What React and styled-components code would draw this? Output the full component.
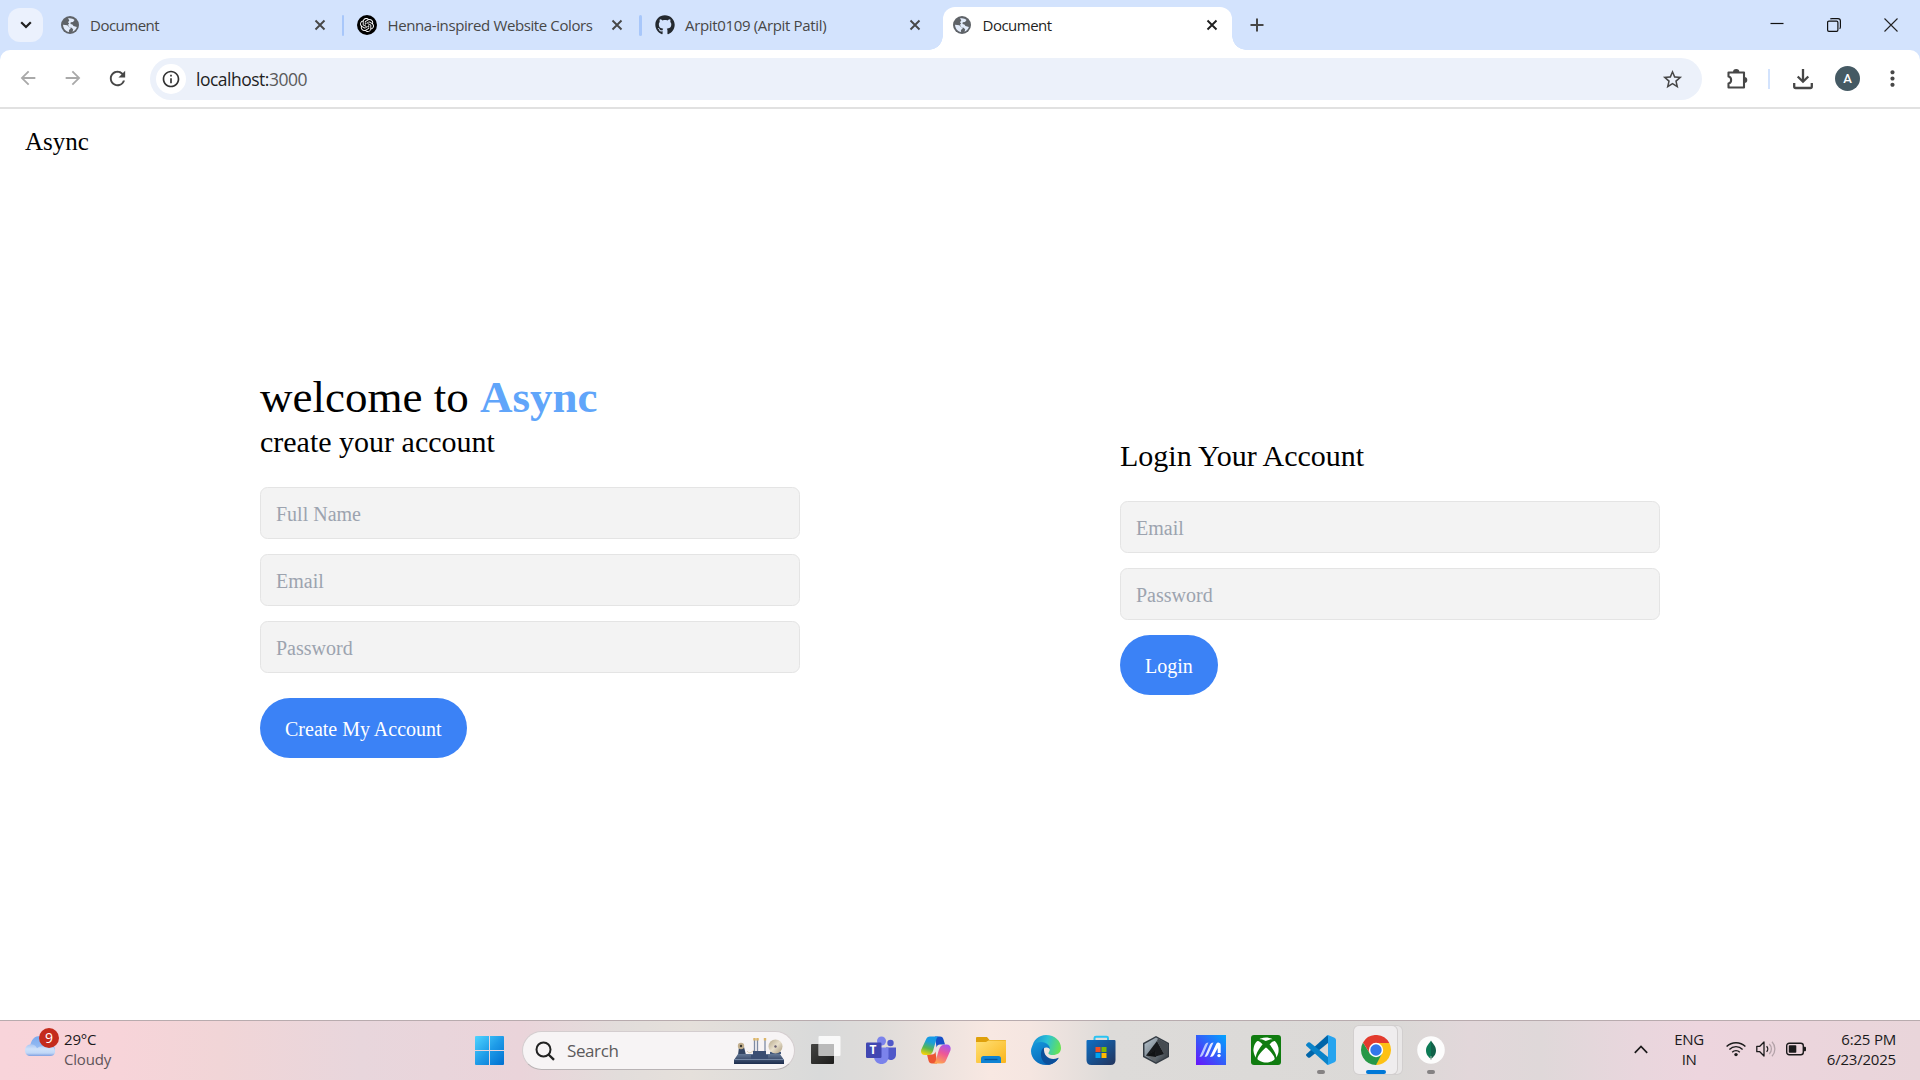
import React from "react";
import styled, { createGlobalStyle, css } from "styled-components";
import {
  MdArrowBack,
  MdArrowForward,
  MdRefresh,
  MdInfoOutline,
  MdStarBorder,
  MdMoreVert,
} from "react-icons/md";
import { FaGithub, FaXbox } from "react-icons/fa";
import { SiOpenai } from "react-icons/si";

const GlobalStyle = createGlobalStyle`
  *, *::before, *::after { box-sizing: border-box; }
  html, body { margin: 0; padding: 0; overflow: hidden; background: #fff; }
  svg { display: block; flex: none; }
`;

const uiFont = `"Open Sans", "Noto Sans", sans-serif`;
const pageFont = `"Liberation Serif", "Times New Roman", serif`;

const Screen = styled.div`
  width: 1920px;
  height: 1080px;
  display: flex;
  flex-direction: column;
  background: #fff;
  overflow: hidden;
`;

/* ---------- browser: tab strip ---------- */

const TabStrip = styled.div`
  height: 50px;
  flex: none;
  display: flex;
  align-items: stretch;
  padding-left: 8px;
  background: #d3e3fd;
`;

const TabSearch = styled.button`
  width: 35px;
  height: 34px;
  margin-top: 8px;
  padding: 0;
  border: 0;
  border-radius: 12px;
  background: #ebf1fd;
  display: grid;
  place-items: center;
`;

const activeTab = css`
  position: relative;
  width: 289.5px;
  height: 43px;
  margin: 7px 0 0 7px;
  padding: 0 14px 7px 9px;
  background: #fff;
  border-radius: 12px 12px 0 0;
  color: #1f1f1f;
  &::before,
  &::after {
    content: "";
    position: absolute;
    bottom: 0;
    width: 14px;
    height: 14px;
  }
  &::before {
    right: 100%;
    background: radial-gradient(circle at 0 0, transparent 13.5px, #fff 14px);
  }
  &::after {
    left: 100%;
    background: radial-gradient(circle at 100% 0, transparent 13.5px, #fff 14px);
  }
`;

const idleTab = css`
  width: 297.5px;
  padding: 0 15px 0 1px;
  color: #474747;
`;

const Tab = styled.div`
  flex: none;
  display: flex;
  align-items: center;
  font: 400 15px/20px ${uiFont};
  ${(p) => (p.$active ? activeTab : idleTab)}
`;

const TabDivider = styled.span`
  width: 2.5px;
  height: 21px;
  margin-right: 13px;
  border-radius: 2px;
  background: ${(p) => (p.$visible ? "#a8c7fa" : "transparent")};
`;

const Favicon = styled.span`
  width: 20px;
  height: 20px;
  flex: none;
  display: grid;
  place-items: center;
  border-radius: 50%;
  background: ${(p) => p.$bg || "transparent"};
  color: ${(p) => p.$color || "#5f6368"};
`;

const TabTitle = styled.span`
  flex: 1;
  margin-left: ${(p) => p.$left || 10.5}px;
  white-space: nowrap;
  letter-spacing: ${(p) => p.$tracking}px;
`;

const NewTab = styled.button`
  width: 50px;
  padding: 0;
  border: 0;
  background: none;
  display: grid;
  place-items: center;
`;

const WindowControls = styled.div`
  margin-left: auto;
  display: flex;
  align-items: center;
  gap: 43px;
  padding-right: 22px;
`;

/* ---------- browser: toolbar ---------- */

const ToolbarBack = styled.div`
  flex: none;
  background: #d3e3fd;
`;

const Toolbar = styled.div`
  height: 59px;
  display: flex;
  align-items: center;
  padding: 0 15px 0 17px;
  background: #fff;
  border-bottom: 2px solid #e1e1e1;
  border-radius: 10px 10px 0 0;
`;

const NavButtons = styled.div`
  display: flex;
  gap: 22.5px;
  width: 133px;
  color: #a9a9a9;
`;

const AddressBar = styled.div`
  width: 1552px;
  height: 42px;
  margin-top: 1px;
  padding: 0 18px 0 6px;
  display: flex;
  flex: none;
  align-items: center;
  border-radius: 21px;
  background: #ecf1fa;
  font: 400 17.5px/24px ${uiFont};
  letter-spacing: -0.5px;
  color: #1f1f1f;
`;

const SiteInfo = styled.span`
  width: 30px;
  height: 30px;
  margin-right: 10px;
  border-radius: 50%;
  display: grid;
  place-items: center;
  background: #fff;
  color: #333;
`;

const Port = styled.span`
  flex: 1;
  color: #5a5a5a;
`;

const ToolbarActions = styled.div`
  flex: 1;
  display: flex;
  align-items: center;
  padding-left: 24px;
  color: #474747;
`;

const ToolbarDivider = styled.span`
  width: 2px;
  height: 20px;
  margin: 0 22px 0 20px;
  background: #d3e3fd;
`;

const Avatar = styled.span`
  width: 25px;
  height: 25px;
  margin: 0 20px 0 21px;
  border-radius: 50%;
  background: #455a64;
  color: #fff;
  font: 500 13px/25px Roboto, sans-serif;
  text-align: center;
`;

/* ---------- page ---------- */

const Page = styled.div`
  height: 911px;
  flex: none;
  display: flex;
  flex-direction: column;
  font-family: ${pageFont};
  color: #000;
`;

const PageNav = styled.nav`
  height: 50px;
  padding: 19px 25px 0;
  font-size: 25px;
  line-height: 28px;
`;

const Main = styled.main`
  flex: 1;
  display: flex;
  align-items: center;
  justify-content: space-between;
  padding: 0 260px 51px;
`;

const Panel = styled.section`
  width: 540px;
  padding-top: ${(p) => p.$top || 0}px;
`;

const Heading = styled.h1`
  margin: 0 0 -1px;
  font-size: 45px;
  line-height: 45px;
  font-weight: 400;
`;

const Brand = styled.span`
  color: #60a5fa;
  font-weight: 700;
`;

const Subheading = styled.h2`
  margin: 0 0 23px;
  font-size: 30px;
  line-height: 45px;
  font-weight: 400;
`;

const Form = styled.form`
  display: flex;
  flex-direction: column;
  align-items: flex-start;
  gap: 15px;
`;

const Field = styled.input`
  width: 100%;
  height: 52px;
  padding: 2px 15px 0;
  border: 1px solid #e4e4e4;
  border-radius: 7.5px;
  background: #f3f3f3;
  font: 400 20px ${pageFont};
  outline: none;
  &::placeholder {
    color: #9ca3af;
    opacity: 1;
  }
`;

const Submit = styled.button`
  height: 60px;
  margin-top: ${(p) => p.$top || 0}px;
  padding: 2px 25px 0;
  border: 0;
  border-radius: 30px;
  background: #3b82f6;
  color: #fff;
  font: 400 20px ${pageFont};
`;

/* ---------- taskbar ---------- */

const Taskbar = styled.footer`
  height: 60px;
  flex: none;
  display: grid;
  grid-template-columns: 475px 1fr 315px;
  border-top: 1px solid #b8abae;
  font: 400 15px/20px ${uiFont};
  color: #1b1a1b;
  background: linear-gradient(
    90deg,
    #f8d4da 0,
    #f7d4d9 120px,
    #f1d5d7 220px,
    #e8d6dc 360px,
    #ead4da 520px,
    #e2dddb 620px,
    #e5e0db 690px,
    #d9dada 820px,
    #dfdcda 880px,
    #f8e8e2 990px,
    #f5e6e1 1030px,
    #dddbd9 1110px,
    #dbd9d7 1400px,
    #e2d7da 1470px,
    #dfd8d9 1540px,
    #e9d6dd 1640px,
    #edd5de 1700px,
    #e9d5da 1920px
  );
`;

const Weather = styled.div`
  display: flex;
  padding: 8px 0 0 24px;
`;

const WeatherIcon = styled.div`
  position: relative;
  width: 40px;
  padding-top: 6px;
`;

const Badge = styled.span`
  position: absolute;
  left: 15px;
  top: -1px;
  width: 20px;
  height: 20px;
  border-radius: 50%;
  background: #c42b1c;
  color: #fff;
  font-size: 14px;
  line-height: 20px;
  text-align: center;
`;

const Lines = styled.div`
  width: ${(p) => p.$width || "auto"};
  display: flex;
  flex-direction: column;
  text-align: ${(p) => p.$align || "left"};
  letter-spacing: ${(p) => p.$tracking || 0}px;
  white-space: nowrap;
`;

const Muted = styled.span`
  color: #5f5559;
`;

const Apps = styled.div`
  display: flex;
  align-items: flex-start;
`;

const Start = styled.div`
  width: 47px;
  padding-top: 15px;
`;

const SearchBox = styled.div`
  width: 273px;
  height: 39px;
  margin: 10px 3px 0 0;
  padding: 0 10px 0 12px;
  display: flex;
  align-items: center;
  border: 1px solid #d4cdcf;
  border-bottom-color: #b9b3b5;
  border-radius: 20px;
  background: #f7f4f5;
`;

const SearchLabel = styled.span`
  flex: 1;
  margin-left: 12px;
  font-size: 17px;
  letter-spacing: -0.4px;
  color: #5c5a5b;
`;

const AppSlot = styled.div`
  width: 55px;
  height: 54px;
  flex: none;
  display: flex;
  flex-direction: column;
  align-items: center;
  padding-top: 5px;
`;

const AppTile = styled.div`
  width: ${(p) => (p.$active ? 43 : 40)}px;
  height: 48px;
  flex: none;
  display: grid;
  place-items: center;
  border-radius: 5px;
  ${(p) =>
    p.$active &&
    css`
      background: #efedee;
      box-shadow: 0 0 0 1px #d2cfcf, 5px 0 0 0 #e9e7e7, 5px 0 0 1px #d2cfcf;
    `}
`;

const Indicator = styled.span`
  width: ${(p) => (p.$active ? 20 : 8)}px;
  height: 4px;
  margin-top: -4px;
  border-radius: 2px;
  background: ${(p) => (p.$active ? "#0078d7" : "#858283")};
  z-index: 1;
`;

const Tray = styled.div`
  display: flex;
  justify-content: flex-end;
  padding: 8px 24px 0 0;
`;

const TrayItem = styled.div`
  height: 40px;
  display: flex;
  align-items: center;
  gap: 10px;
  margin-right: ${(p) => p.$right}px;
  padding-left: ${(p) => p.$left || 0}px;
`;

/* ---------- icons ---------- */

const Cross = ({ color = "#474747" }) => (
  <svg width="12" height="12" viewBox="0 0 12 12" stroke={color} strokeWidth="1.9">
    <path d="M1.500 1.500 10.500 10.500M10.500 1.500 1.500 10.500" />
  </svg>
);

const Globe = () => (
  <Favicon>
    <svg width="18" height="18" viewBox="0 0 18 18">
      <circle cx="9" cy="9" r="9" fill="#5f6368" />
      <path
        d="M7 2.300C9.800 1.800 12 2.500 13.500 4L12 5.900 9.700 6.200 9.500 7.900 11.400 8.500 12.500 10 15.900 11C15 13.500 13.500 15 11.500 15.800L12.200 13.500 10.700 11.800H8.600L7 8.700 8.200 7.400 7 6.200 8.300 4.600Z"
        fill="#e3ecfb"
      />
      <path d="M2 8.800l4.300.4 2.300 2.400 1.200 1-1.900 1.500.2 2C4.800 15.600 2.300 12.700 2 8.800z" fill="#e3ecfb" />
    </svg>
  </Favicon>
);

const Puzzle = () => (
  <svg width="22" height="22" viewBox="0 0 22 22">
    <path
      d="M2.500 4.500h15.500v15H2.500v-4c3.500-.8 3.500-6.200 0-7z"
      fill="none"
      stroke="#474747"
      strokeWidth="2.100"
      strokeLinejoin="round"
    />
    <path d="M7 4.200a3.200 3.200 0 0 1 6.400 0zM18.300 9a3 3 0 0 1 0 6z" fill="#474747" />
  </svg>
);

const Download = () => (
  <svg width="22" height="22" viewBox="0 0 22 22" fill="none" stroke="#474747" strokeWidth="2.300">
    <path d="M11 1v12.500M5.700 8.500 11 13.700l5.300-5.200M2.200 15v3.500q0 1.500 1.500 1.500h14.600q1.500 0 1.500-1.500V15" />
  </svg>
);

const Cloud = () => (
  <svg width="32" height="22" viewBox="0 0 32 22">
    <defs>
      <linearGradient id="cloudA" x1="0" y1="0" x2="0" y2="1">
        <stop offset="0" stopColor="#79a9ee" />
        <stop offset="1" stopColor="#a9c8f6" />
      </linearGradient>
      <linearGradient id="cloudB" x1="0" y1="0" x2="0" y2="1">
        <stop offset="0" stopColor="#a9c6f2" />
        <stop offset="0.400" stopColor="#cfe1f9" />
        <stop offset="0.750" stopColor="#c0d7f7" />
        <stop offset="1" stopColor="#7f9fe0" />
      </linearGradient>
    </defs>
    <path d="M6 12C7 4 11 1 16 1c6 0 8 4 9 8 4 0 6 2 6 6s-2 5-5 5H10z" fill="url(#cloudA)" />
    <path d="M7 21c-4 0-6-2-6-5.500S4 9 7.500 9.300c3 .2 4.500 2 5.500 4 2-2 5-2.500 8-1.500 3-2 10-1 10 4.700 0 3-2 4.500-5 4.500z" fill="url(#cloudB)" />
  </svg>
);

const WindowsLogo = () => (
  <svg width="29" height="29" viewBox="0 0 29 29">
    <defs>
      <linearGradient id="win" gradientUnits="userSpaceOnUse" x1="0" y1="0" x2="29" y2="29">
        <stop offset="0" stopColor="#4fd4ff" />
        <stop offset="0.500" stopColor="#1f9ce8" />
        <stop offset="1" stopColor="#006fd0" />
      </linearGradient>
    </defs>
    <path d="M1 0h13v14H0V1q0-1 1-1zM15 0h13q1 0 1 1v13H15zM0 15h14v14H1q-1 0-1-1zM15 15h14v13q0 1-1 1H15z" fill="url(#win)" />
  </svg>
);

const Magnifier = () => (
  <svg width="20" height="20" viewBox="0 0 20 20" fill="none" stroke="#222" strokeWidth="2">
    <circle cx="8.500" cy="8.500" r="7" />
    <path d="m13.500 13.500 5.500 5.300" strokeWidth="2.400" />
  </svg>
);

const Telegraph = () => (
  <svg width="50" height="28" viewBox="0 0 50 28">
    <defs>
      <linearGradient id="baseG" x1="0" y1="0" x2="0" y2="1">
        <stop offset="0" stopColor="#647896" />
        <stop offset="1" stopColor="#1d2c4c" />
      </linearGradient>
      <linearGradient id="wheel" x1="0" y1="0" x2="1" y2="1">
        <stop offset="0" stopColor="#b5a789" />
        <stop offset="0.500" stopColor="#e8dfcb" />
        <stop offset="1" stopColor="#a8997b" />
      </linearGradient>
    </defs>
    <path d="M13 14c3 4 5 0 8-1" stroke="#ddd2b8" fill="none" />
    <path d="M20.500 2v12M23.500 2v12M31 2v12" stroke="#7f8ca4" strokeWidth="1.300" />
    <path d="M20.500 1v2.500M23.500 1v2.500M31 1v2.500" stroke="#dcb567" strokeWidth="2.400" />
    <path d="M36 17v-2l4-2 7 2v2z" fill="#43587a" />
    <circle cx="41.500" cy="9.500" r="7" fill="url(#wheel)" />
    <circle cx="41.500" cy="9.500" r="1.200" fill="#6a5f70" />
    <path d="M4 18 5 10h5l2 8z" fill="#334563" />
    <circle cx="7" cy="9" r="3.200" fill="#c2af8e" />
    <circle cx="7" cy="9" r="1.200" fill="#3b3931" />
    <path d="M4 17h42l4 6v4H0v-4z" fill="url(#baseG)" />
    <path d="M19 14h13v4h2v4H17v-4h2z" fill="#3a4e72" />
    <path d="M0 22.500h50" stroke="#7689a6" />
  </svg>
);

const TaskView = () => (
  <svg width="30" height="30" viewBox="0 0 30 30">
    <defs>
      <linearGradient id="tv" x1="0" y1="0" x2="1" y2="1">
        <stop offset="0" stopColor="#444442" />
        <stop offset="1" stopColor="#1d1d1c" />
      </linearGradient>
    </defs>
    <rect x="0" y="9" width="23" height="20" rx="1" fill="url(#tv)" />
    <rect x="7.500" y="1" width="22" height="20" rx="1" fill="#fff" opacity="0.820" />
    <path d="M7.500 9H23v12H7.500z" fill="#a9a9a9" opacity="0.650" />
  </svg>
);

const TeamsLetter = styled.span`
  position: absolute;
  left: 0;
  top: 7px;
  width: 15px;
  font: 700 12px/15px ${uiFont};
  text-align: center;
  color: #fff;
`;

const TeamsBox = styled.div`
  position: relative;
  width: 30px;
  height: 30px;
`;

const Teams = () => (
  <TeamsBox>
    <svg width="30" height="30" viewBox="0 0 30 30">
      <circle cx="24.500" cy="8" r="3.200" fill="#5059c9" />
      <path d="M20 12.500h10v7c0 4-3 5.500-5 5.500s-5-1-5-5z" fill="#5059c9" />
      <circle cx="15.500" cy="6" r="4.500" fill="#7b83eb" />
      <path d="M8 12.500h14.500v9c0 5-3.500 7.500-7 7.500s-7.500-2.500-7.500-7.500z" fill="#7b83eb" />
      <rect x="0" y="7.500" width="15.500" height="15.500" rx="1.200" fill="#4147b2" />
    </svg>
    <TeamsLetter>T</TeamsLetter>
  </TeamsBox>
);

const Copilot = () => (
  <svg width="30" height="30" viewBox="0 0 30 30">
    <defs>
      <linearGradient id="cpA" x1="0.600" y1="0" x2="0.300" y2="1">
        <stop offset="0" stopColor="#1499ea" />
        <stop offset="0.300" stopColor="#1c9fd8" />
        <stop offset="0.650" stopColor="#58b74f" />
        <stop offset="1" stopColor="#f5d20a" />
      </linearGradient>
      <linearGradient id="cpB" x1="0.700" y1="0" x2="0.300" y2="1">
        <stop offset="0" stopColor="#a955ec" />
        <stop offset="0.450" stopColor="#ee5797" />
        <stop offset="1" stopColor="#ffa64d" />
      </linearGradient>
    </defs>
    <path d="M14 1.500h5c2 0 3 1 3.500 3l1.500 5h-5c-2 0-3 1-3.500 3z" fill="#1650c8" />
    <path d="M16 28.500h-5c-2 0-3-1-3.500-3L6 19.500h5c2 0 3-1 3.500-3z" fill="#ed5633" />
    <path d="M9 1.500h9c-1.800.3-2.500 2-3 4l-2.700 9.500c-1 4-3 5-6 5H4c-3.500 0-4.500-2.500-3.700-5.500L5 4.500c.7-2 2-3 4-3z" fill="url(#cpA)" />
    <path d="M21 28.500h-9c1.800-.3 2.500-2 3-4l2.700-9c1-4 3-6 6-6h2c3.500 0 4.500 3 3.700 6L25 25.500c-.7 2-2 3-4 3z" fill="url(#cpB)" />
  </svg>
);

const Folder = () => (
  <svg width="30" height="28" viewBox="0 0 30 28">
    <defs>
      <linearGradient id="fold" x1="0" y1="0" x2="1" y2="1">
        <stop offset="0" stopColor="#ffe076" />
        <stop offset="1" stopColor="#fab51b" />
      </linearGradient>
    </defs>
    <path d="M1 1h10l2.500 3H29q1 0 1 1v5H0V2q0-1 1-1z" fill="#dfa00b" />
    <path d="M0 6h10l2.500-1.500H29q1 0 1 1V26q0 1-1 1H1q-1 0-1-1z" fill="url(#fold)" />
    <path d="M5 27v-4.500Q5 20 7.500 20h15q2.500 0 2.500 2.500V27z" fill="#1083d3" />
    <path d="M8.500 23.500h13" stroke="#07569d" strokeWidth="1.300" />
  </svg>
);

const Edge = () => (
  <svg width="30" height="30" viewBox="0 0 30 30">
    <defs>
      <linearGradient id="edA" x1="0" y1="0.300" x2="1" y2="0.500">
        <stop offset="0" stopColor="#168cd5" />
        <stop offset="0.500" stopColor="#2cc2d5" />
        <stop offset="1" stopColor="#67e353" />
      </linearGradient>
      <linearGradient id="edB" x1="0" y1="0" x2="0.700" y2="1">
        <stop offset="0" stopColor="#1599dd" />
        <stop offset="1" stopColor="#0862b5" />
      </linearGradient>
    </defs>
    <path d="M1 13C2 5 8 0 15 0c9 0 15 6 15 13 0 5-4 7-8 7-5 0-5-2-4-3 2-3 0-8-6-9-5-.5-9 1-11 5z" fill="url(#edA)" />
    <path d="M0 16C0 10 5 7 10 7c6 0 9 4 9 7-6-4-9 1-7 6s8 8 15 4c-3 4-7 6-12 6C7 30 0 24 0 16z" fill="url(#edB)" />
    <path d="M13 12.500c-5 3-4 16 5 17.300 4-.8 7-3 9.500-6.300.3-.6-.2-.8-.7-.5C20 26 12 22 13 12.500z" fill="#0c4f9a" />
  </svg>
);

const Store = () => (
  <svg width="30" height="30" viewBox="0 0 30 30">
    <defs>
      <linearGradient id="store" x1="0" y1="0" x2="1" y2="1">
        <stop offset="0" stopColor="#0d6fc4" />
        <stop offset="1" stopColor="#23345c" />
      </linearGradient>
    </defs>
    <path d="M8.500 6.500V3Q8.500 1.800 10 1.800h10.500q1.500 0 1.500 1.200v3.500" fill="none" stroke="#2bc3f2" strokeWidth="2" />
    <path d="M1.500 5h27q1 0 1 1v19q0 5-5 5H5.500q-5 0-5-5V6q0-1 1-1z" fill="url(#store)" />
    <path d="M9.500 12h5v5h-5z" fill="#f25022" />
    <path d="M15.500 12h5v5h-5z" fill="#7fba00" />
    <path d="M9.500 18h5v5h-5z" fill="#00a4ef" />
    <path d="M15.500 18h5v5h-5z" fill="#ffb900" />
  </svg>
);

const ArmouryHex = () => (
  <svg width="28" height="30" viewBox="0 0 28 30">
    <defs>
      <linearGradient id="hex" x1="0" y1="0" x2="1" y2="1">
        <stop offset="0" stopColor="#bcc8d2" />
        <stop offset="0.500" stopColor="#7b8790" />
        <stop offset="1" stopColor="#262a2f" />
      </linearGradient>
    </defs>
    <path d="M14 1 27 8v14l-13 7L1 22V8z" fill="#343b43" />
    <path d="M14 2.500 25.500 9v12.500L14 27.500 2.500 21V9z" fill="url(#hex)" />
    <path d="M15 6 4 20.500l8 1.500 10-3z" fill="#17191c" />
    <path d="m15 6 7 13 3.500 2.500V9L16 3.500z" fill="#454b51" />
    <path d="m4 20.500 9-4.500 1 11z" fill="#62676c" />
    <path d="m4 20.500 9-5 1 6.500z" fill="#111315" />
  </svg>
);

const MyAsus = () => (
  <svg width="30" height="30" viewBox="0 0 30 30">
    <defs>
      <linearGradient id="asus" x1="0" y1="1" x2="1" y2="0">
        <stop offset="0" stopColor="#6a12fb" />
        <stop offset="0.450" stopColor="#3757f9" />
        <stop offset="1" stopColor="#02a5ff" />
      </linearGradient>
    </defs>
    <path d="M0 0h30v30H0z" fill="url(#asus)" />
    <path d="M3.500 22 9 9.500q.8-2 3.500-2L7 20q-.9 2-3.500 2z" fill="#b9c8ff" />
    <path d="M8.500 22 14 9.500q.8-2 3.500-2L12 20q-.9 2-3.500 2z" fill="#e1e6ff" />
    <path d="M14 22 20.300 8.700q1-1.500 2.700-1 1.700.5 1.700 2.300v8h-3v-5L18 20q-.9 2-4 2z" fill="#fff" />
    <circle cx="23" cy="20.600" r="1.700" fill="#fff" />
  </svg>
);

const XboxTile = styled.div`
  width: 30px;
  height: 30px;
  display: grid;
  place-items: center;
  border-radius: 3px;
  background: #107c10;
  color: #fff;
`;

const VsCode = () => (
  <svg width="30" height="30" viewBox="0 0 30 30">
    <path d="M22 0v8L4 22.500q-1 .7-2 0L.5 21q-1-1 0-2L20.500 1z" fill="#0065a9" />
    <path d="M22 30v-8L4 7.500q-1-.7-2 0L.5 9q-1 1 0 2L20.500 29z" fill="#0a83c9" />
    <path d="M22 0l6.500 2.800Q30 3.500 30 5v20q0 1.500-1.500 2.200L22 30q-1 0-1.800-1c1 .5 1.800 0 1.800-1V2c0-1-.8-1.500-1.800-1Q21 0 22 0z" fill="#26a4ef" />
  </svg>
);

const Chrome = () => (
  <svg width="30" height="30" viewBox="0 0 30 30">
    <path d="M15 8h13.270A15 15 0 0 1 14.500 30L21 18.500z" fill="#fdc114" />
    <path d="M2.010 7.500A15 15 0 0 0 15 30l6.060-11.500L15 22l-6.060-3.500z" fill="#279847" />
    <path d="M2.010 7.500 8.940 18.500 15 8H28.300A15 15 0 0 0 2.010 7.500z" fill="#e33b2e" />
    <circle cx="15" cy="15" r="7.200" fill="#fff" />
    <circle cx="15" cy="15" r="5.700" fill="#3377ea" />
  </svg>
);

const Mongo = () => (
  <svg width="28" height="28" viewBox="0 0 28 28">
    <circle cx="14" cy="14" r="13.800" fill="#fcfcfc" />
    <path d="M14 4.500c.8 2 5 5 5 10 0 4-2.500 6.500-4.500 8h-.5z" fill="#116149" />
    <path d="M14 4.500c-.8 2-5 5-5 10 0 4 2.500 6.500 4.500 8h.5z" fill="#0c7a55" />
    <path d="M14 20v4" stroke="#a5b5ac" />
  </svg>
);

const ChevronUp = () => (
  <svg width="14" height="9" viewBox="0 0 14 9" fill="none" stroke="#1b1a1b" strokeWidth="1.700">
    <path d="m.8 7.800 6.200-6.300 6.200 6.300" />
  </svg>
);

const Wifi = () => (
  <svg width="20" height="16" viewBox="0 0 20 16" fill="none" stroke="#1b1a1b" strokeWidth="1.400">
    <path d="M.6 5.600a13.300 13.300 0 0 1 18.800 0M3.400 8.400a9.300 9.300 0 0 1 13.200 0M6.200 11.200a5.400 5.400 0 0 1 7.600 0" />
    <circle cx="10" cy="13.600" r="1.700" fill="#1b1a1b" stroke="none" />
  </svg>
);

const Speaker = () => (
  <svg width="20" height="18" viewBox="0 0 20 18" fill="none" stroke="#1b1a1b" strokeWidth="1.300">
    <path d="M.8 6.300h3L8 2v14l-4.200-4.300h-3z" strokeLinejoin="round" />
    <path d="M10.600 6.200a4 4 0 0 1 0 5.600" />
    <path d="M13.300 4a7 7 0 0 1 0 10M16 1.800a10.500 10.500 0 0 1 0 14.400" stroke="#b3a3a9" />
  </svg>
);

const Battery = () => (
  <svg width="20" height="14" viewBox="0 0 20 14">
    <rect x="0.700" y="1.200" width="16.600" height="11.600" rx="2.500" fill="none" stroke="#1b1a1b" strokeWidth="1.400" />
    <rect x="2.800" y="3.300" width="7.500" height="7.400" rx="0.800" fill="#1b1a1b" />
    <path d="M18 4.700h1q1 0 1 1v2.600q0 1-1 1h-1z" fill="#1b1a1b" />
  </svg>
);

/* ---------- data ---------- */

const tabs = [
  { title: "Document", tracking: -0.5, icon: <Globe /> },
  {
    title: "Henna-inspired Website Colors",
    tracking: -0.39,
    divider: true,
    icon: (
      <Favicon $bg="#000" $color="#fff">
        <SiOpenai size={14} />
      </Favicon>
    ),
  },
  {
    title: "Arpit0109 (Arpit Patil)",
    tracking: -0.34,
    divider: true,
    icon: (
      <Favicon $color="#24292f">
        <FaGithub size={20} />
      </Favicon>
    ),
  },
];

const apps = [
  { name: "taskview", icon: <TaskView /> },
  { name: "teams", icon: <Teams /> },
  { name: "copilot", icon: <Copilot /> },
  { name: "explorer", icon: <Folder /> },
  { name: "edge", icon: <Edge /> },
  { name: "store", icon: <Store /> },
  { name: "armoury", icon: <ArmouryHex /> },
  { name: "myasus", icon: <MyAsus /> },
  {
    name: "xbox",
    icon: (
      <XboxTile>
        <FaXbox size={26} />
      </XboxTile>
    ),
  },
  { name: "vscode", icon: <VsCode />, running: true },
  { name: "chrome", icon: <Chrome />, running: true, active: true },
  { name: "mongo", icon: <Mongo />, running: true },
];

/* ---------- sections ---------- */

const BrowserTabs = () => (
  <TabStrip>
    <TabSearch>
      <svg width="12" height="8" viewBox="0 0 12 8" fill="none" stroke="#1f1f1f" strokeWidth="2.200">
        <path d="m1.200 1.200 4.800 4.800 4.800-4.800" />
      </svg>
    </TabSearch>
    {tabs.map((tab) => (
      <Tab key={tab.title}>
        <TabDivider $visible={tab.divider} />
        {tab.icon}
        <TabTitle $tracking={tab.tracking}>{tab.title}</TabTitle>
        <Cross />
      </Tab>
    ))}
    <Tab $active>
      <Globe />
      <TabTitle $tracking={-0.5} $left={11}>
        Document
      </TabTitle>
      <Cross color="#1f1f1f" />
    </Tab>
    <NewTab>
      <svg width="14" height="14" viewBox="0 0 14 14" stroke="#474747" strokeWidth="2">
        <path d="M7 .5v13M.5 7h13" />
      </svg>
    </NewTab>
    <WindowControls>
      <svg width="14" height="14" viewBox="0 0 14 14" stroke="#111" strokeWidth="1.200">
        <path d="M.5 5.500h13" />
      </svg>
      <svg width="14" height="14" viewBox="0 0 14 14" fill="none" stroke="#111" strokeWidth="1.200">
        <rect x="0.600" y="3.100" width="10.300" height="10.300" rx="1.300" />
        <path d="M3.300 1.200Q3.800.6 5 .6h6q2.400 0 2.400 2.400v6q0 1.200-.8 1.800" />
      </svg>
      <svg width="14" height="14" viewBox="0 0 14 14" stroke="#222" strokeWidth="1.100">
        <path d="m.5.5 13 13M13.500.5l-13 13" />
      </svg>
    </WindowControls>
  </TabStrip>
);

const BrowserToolbar = () => (
  <ToolbarBack>
    <Toolbar>
      <NavButtons>
        <MdArrowBack size={22} />
        <MdArrowForward size={22} />
        <MdRefresh size={23} color="#474747" />
      </NavButtons>
      <AddressBar>
        <SiteInfo>
          <MdInfoOutline size={20} />
        </SiteInfo>
        <span>localhost:</span>
        <Port>3000</Port>
        <MdStarBorder size={23} color="#474747" />
      </AddressBar>
      <ToolbarActions>
        <Puzzle />
        <ToolbarDivider />
        <Download />
        <Avatar>A</Avatar>
        <MdMoreVert size={25} />
      </ToolbarActions>
    </Toolbar>
  </ToolbarBack>
);

const AccountPage = () => (
  <Page>
    <PageNav>Async</PageNav>
    <Main>
      <Panel $top={5}>
        <Heading>
          welcome to <Brand>Async</Brand>
        </Heading>
        <Subheading>create your account</Subheading>
        <Form>
          <Field placeholder="Full Name" />
          <Field placeholder="Email" />
          <Field placeholder="Password" />
          <Submit type="button" $top={10}>
            Create My Account
          </Submit>
        </Form>
      </Panel>
      <Panel>
        <Subheading>Login Your Account</Subheading>
        <Form>
          <Field placeholder="Email" />
          <Field placeholder="Password" />
          <Submit type="button">Login</Submit>
        </Form>
      </Panel>
    </Main>
  </Page>
);

const DesktopTaskbar = () => (
  <Taskbar>
    <Weather>
      <WeatherIcon>
        <Cloud />
        <Badge>9</Badge>
      </WeatherIcon>
      <Lines $tracking={-0.2}>
        <span>29°C</span>
        <Muted>Cloudy</Muted>
      </Lines>
    </Weather>
    <Apps>
      <Start>
        <WindowsLogo />
      </Start>
      <SearchBox>
        <Magnifier />
        <SearchLabel>Search</SearchLabel>
        <Telegraph />
      </SearchBox>
      {apps.map((app) => (
        <AppSlot key={app.name}>
          <AppTile $active={app.active}>{app.icon}</AppTile>
          {app.running && <Indicator $active={app.active} />}
        </AppSlot>
      ))}
    </Apps>
    <Tray>
      <TrayItem $right={21}>
        <ChevronUp />
      </TrayItem>
      <Lines $align="center" $tracking={-0.4} $width="40px">
        <span>ENG</span>
        <span>IN</span>
      </Lines>
      <TrayItem $left={17} $right={10}>
        <Wifi />
        <Speaker />
        <Battery />
      </TrayItem>
      <Lines $align="right" $tracking={-0.2} $width="80px">
        <span>6:25 PM</span>
        <span>6/23/2025</span>
      </Lines>
    </Tray>
  </Taskbar>
);

export default function App() {
  return (
    <Screen>
      <GlobalStyle />
      <BrowserTabs />
      <BrowserToolbar />
      <AccountPage />
      <DesktopTaskbar />
    </Screen>
  );
}
